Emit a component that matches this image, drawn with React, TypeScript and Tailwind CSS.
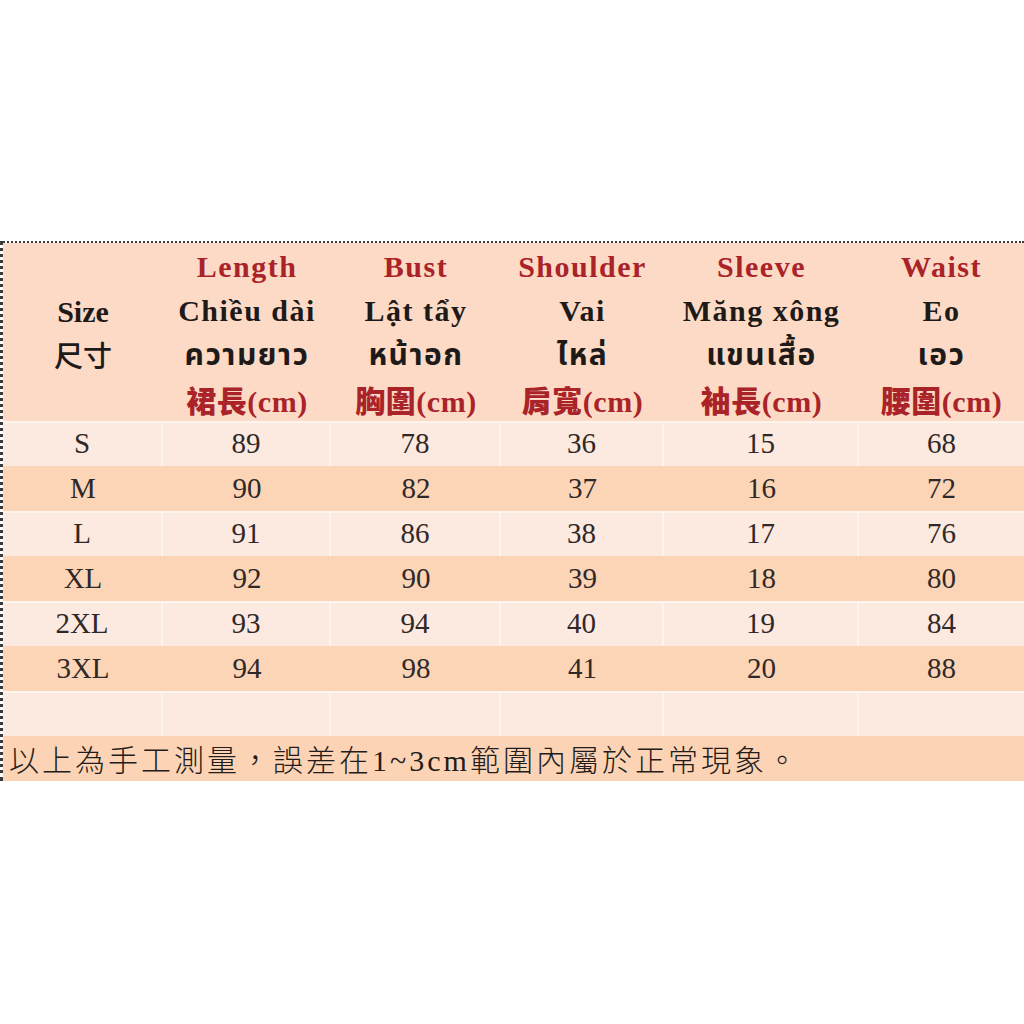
const columns = [
  { en: "Length", vi: "Chiều dài", th: "ความยาว", zh: "裙長" },
  { en: "Bust", vi: "Lật tẩy", th: "หน้าอก", zh: "胸圍" },
  { en: "Shoulder", vi: "Vai", th: "ไหล่", zh: "肩寬" },
  { en: "Sleeve", vi: "Măng xông", th: "แขนเสื้อ", zh: "袖長" },
  { en: "Waist", vi: "Eo", th: "เอว", zh: "腰圍" },
];

const rows = [
  ["S", "89", "78", "36", "15", "68"],
  ["M", "90", "82", "37", "16", "72"],
  ["L", "91", "86", "38", "17", "76"],
  ["XL", "92", "90", "39", "18", "80"],
  ["2XL", "93", "94", "40", "19", "84"],
  ["3XL", "94", "98", "41", "20", "88"],
  ["", "", "", "", "", ""],
];

const serif = "font-['Liberation_Serif','Noto_Sans_Thai','DejaVu_Serif','Noto_Sans_CJK_TC',serif]";
const grid = "grid grid-cols-[160px_168px_170px_163px_195px_1fr]";

export default function App() {
  return (
    <div className="min-h-[1024px] w-[1024px] bg-white pt-[241px]">
      <div className={`border-t-2 border-l-[3px] border-dotted border-[#3a3a3a] ${serif}`}>
        {/* header */}
        <div className={`${grid} h-[178px] bg-[#fcdac6]`}>
          <div className="flex flex-col items-center justify-center pb-[2px] text-[30px] font-bold leading-[42px] text-[#1e1a1a]">
            <span>Size</span>
            <span className="font-['Noto_Sans_CJK_TC',sans-serif] text-[29px] font-medium">尺寸</span>
          </div>
          {columns.map((c) => (
            <div
              key={c.en}
              className="flex flex-col items-center whitespace-nowrap pt-[2px] text-[30px] font-bold leading-[44px] tracking-[1.5px]"
            >
              <span className="text-[#aa2328]">{c.en}</span>
              <span className="text-[#1e1a1a]">{c.vi}</span>
              <span className="text-[#1e1a1a]">{c.th}</span>
              <span className="tracking-[0.5px] text-[#aa2328]">
                <span className="font-['Noto_Sans_CJK_TC',sans-serif] text-[30px] font-black">{c.zh}</span>
                (cm)
              </span>
            </div>
          ))}
        </div>

        {/* data rows */}
        {rows.map((r, i) => {
          const light = i % 2 === 0;
          return (
            <div
              key={i}
              className={`${grid} h-[45px] text-[29px] leading-[45px] text-[#2f2828] ${
                light ? "bg-[#fce9df] shadow-[inset_0_2px_0_#fdf4ee]" : "bg-[#fcd4b6]"
              }`}
            >
              {r.map((v, j) => (
                <div
                  key={j}
                  className={`text-center ${light && j < 5 ? "border-r-2 border-[#fdf4ee]" : ""}`}
                >
                  {v}
                </div>
              ))}
            </div>
          );
        })}

        {/* footnote */}
        <div className="h-[45px] whitespace-nowrap bg-[#fcd3b4] pl-[6px] font-['Liberation_Serif','Noto_Sans_CJK_TC',serif] text-[30px] leading-[45px] tracking-[3px] text-[#221c1c]">
          <span className="font-['Noto_Sans_CJK_TC',sans-serif] font-light">以上為手工測量，誤差在</span>
          1~3cm
          <span className="font-['Noto_Sans_CJK_TC',sans-serif] font-light">範圍內屬於正常現象。</span>
        </div>
      </div>
    </div>
  );
}
